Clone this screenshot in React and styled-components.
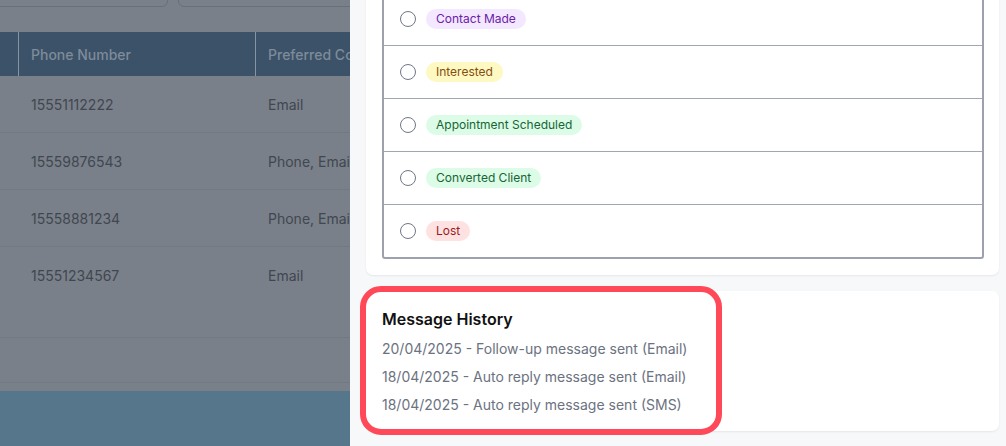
import React from 'react'
import styled, { createGlobalStyle } from 'styled-components'

const GlobalStyle = createGlobalStyle`
  html, body {
    margin: 0;
    padding: 0;
    width: 1006px;
    height: 446px;
    overflow: hidden;
    font-family: Inter, "Noto Sans", sans-serif;
  }
  * { box-sizing: border-box; }
`

const Page = styled.div`
  display: flex;
  width: 1006px;
  height: 446px;
  overflow: hidden;
`

// dimmed page behind the slide-over
const Backdrop = styled.div`
  width: 350px;
  flex-shrink: 0;
  display: flex;
  flex-direction: column;
  overflow: hidden;
  background: #79808a;
`

const FilterBar = styled.div`
  display: flex;
  gap: 10px;
  height: 32px;
  margin-left: -20px;
`

const FilterInput = styled.div`
  width: ${p => p.w}px;
  flex-shrink: 0;
  height: 38px;
  margin-top: -31px;
  border: 1px solid #69707a;
  border-radius: 6px;
`

const Table = styled.div`
  width: 520px;
  margin-left: -60px;
  display: grid;
  grid-template-columns: 78px 237px 205px;
`

const HeadCell = styled.div`
  height: 44px;
  display: flex;
  align-items: center;
  padding-left: 12px;
  background: #3b5268;
  color: #7e8b9a;
  font-size: 14px;
  font-weight: 500;
  white-space: nowrap;
  border-left: ${p => (p.first ? 'none' : '1px solid #8795a3')};
`

const Cell = styled.div`
  height: 57px;
  display: flex;
  align-items: center;
  padding-left: 13px;
  color: #41474f;
  font-size: 14px;
  white-space: nowrap;
  border-bottom: ${p => (p.last ? 'none' : '1px solid #727983')};
`

const TableFoot = styled.div`
  height: ${p => p.h}px;
  flex-shrink: 0;
  border-bottom: 1px solid #727983;
`

const Gap = styled.div`
  height: 8px;
  flex-shrink: 0;
`

const Footer = styled.div`
  flex: 1;
  background: #56778b;
`

const Panel = styled.div`
  flex: 1;
  background: #f7f8fa;
  padding: 0 7px 0 16px;
  overflow: hidden;
`

const Stack = styled.div`
  display: flex;
  flex-direction: column;
  gap: 16px;
  margin-top: -25px;
`

const Card = styled.div`
  position: relative;
  background: #ffffff;
  border-radius: 7px;
  box-shadow: 0 1px 2px rgba(16, 24, 40, 0.08);
  padding: 16px;
`

const StatusList = styled.div`
  border: 2px solid #9ca1ad;
  border-radius: 3px;
  margin-right: -1px;
`

const StatusRow = styled.label`
  display: flex;
  align-items: center;
  gap: 10px;
  padding: 0 15px 0 16px;
  border-top: ${p => (p.first ? 'none' : '1px solid #a1a6b1')};
  height: ${p => (p.first ? 52 : 53)}px;
`

const Radio = styled.span`
  width: 16px;
  height: 16px;
  border-radius: 50%;
  border: 1px solid #6f7684;
  background: #fff;
  flex-shrink: 0;
`

const badgeColors = {
  purple: ['#f3e8ff', '#6b21a8'],
  yellow: ['#fef9c3', '#854d0e'],
  green: ['#dcfce7', '#166534'],
  red: ['#fee2e2', '#991b1b']
}

const Badge = styled.span`
  display: inline-block;
  height: 20px;
  line-height: 20px;
  padding: 0 10px;
  border-radius: 9999px;
  font-size: 12px;
  background: ${p => badgeColors[p.tone][0]};
  color: ${p => badgeColors[p.tone][1]};
`

const Title = styled.h3`
  margin: 0;
  font-size: 16px;
  line-height: 24px;
  font-weight: 600;
  color: #111111;
`

const History = styled.ul`
  list-style: none;
  margin: 8px 0 0;
  padding: 0;
  display: flex;
  flex-direction: column;
  gap: 8px;
`

const HistoryItem = styled.li`
  font-size: 14px;
  line-height: 20px;
  color: #6b7280;
`

// annotation ring drawn over the card
const Highlight = styled.div`
  position: absolute;
  left: -6px;
  top: -5px;
  width: 362px;
  height: 149px;
  border: 6px solid #ff4858;
  border-radius: 21px;
  pointer-events: none;
`

const rows = [
  ['15551112222', 'Email'],
  ['15559876543', 'Phone, Email'],
  ['15558881234', 'Phone, Email'],
  ['15551234567', 'Email']
]

const statuses = [
  ['Contact Made', 'purple'],
  ['Interested', 'yellow'],
  ['Appointment Scheduled', 'green'],
  ['Converted Client', 'green'],
  ['Lost', 'red']
]

const messages = [
  '20/04/2025 - Follow-up message sent (Email)',
  '18/04/2025 - Auto reply message sent (Email)',
  '18/04/2025 - Auto reply message sent (SMS)'
]

const App = () => (
  <Page>
    <GlobalStyle />
    <Backdrop>
      <FilterBar>
        <FilterInput w={188} />
        <FilterInput w={240} />
      </FilterBar>
      <Table>
        <HeadCell first />
        <HeadCell>Phone Number</HeadCell>
        <HeadCell>Preferred Contact</HeadCell>
        {rows.map(([phone, pref], i) => (
          <React.Fragment key={phone}>
            <Cell last={i === rows.length - 1} />
            <Cell last={i === rows.length - 1}>{phone}</Cell>
            <Cell last={i === rows.length - 1}>{pref}</Cell>
          </React.Fragment>
        ))}
      </Table>
      <TableFoot h={34} />
      <TableFoot h={45} />
      <Gap />
      <Footer />
    </Backdrop>
    <Panel>
      <Stack>
        <Card>
          <StatusList>
            {statuses.map(([label, tone], i) => (
              <StatusRow key={label} first={i === 0}>
                <Radio />
                <Badge tone={tone}>{label}</Badge>
              </StatusRow>
            ))}
          </StatusList>
        </Card>
        <Card>
          <Title>Message History</Title>
          <History>
            {messages.map(m => (
              <HistoryItem key={m}>{m}</HistoryItem>
            ))}
          </History>
          <Highlight />
        </Card>
      </Stack>
    </Panel>
  </Page>
)

export default App
